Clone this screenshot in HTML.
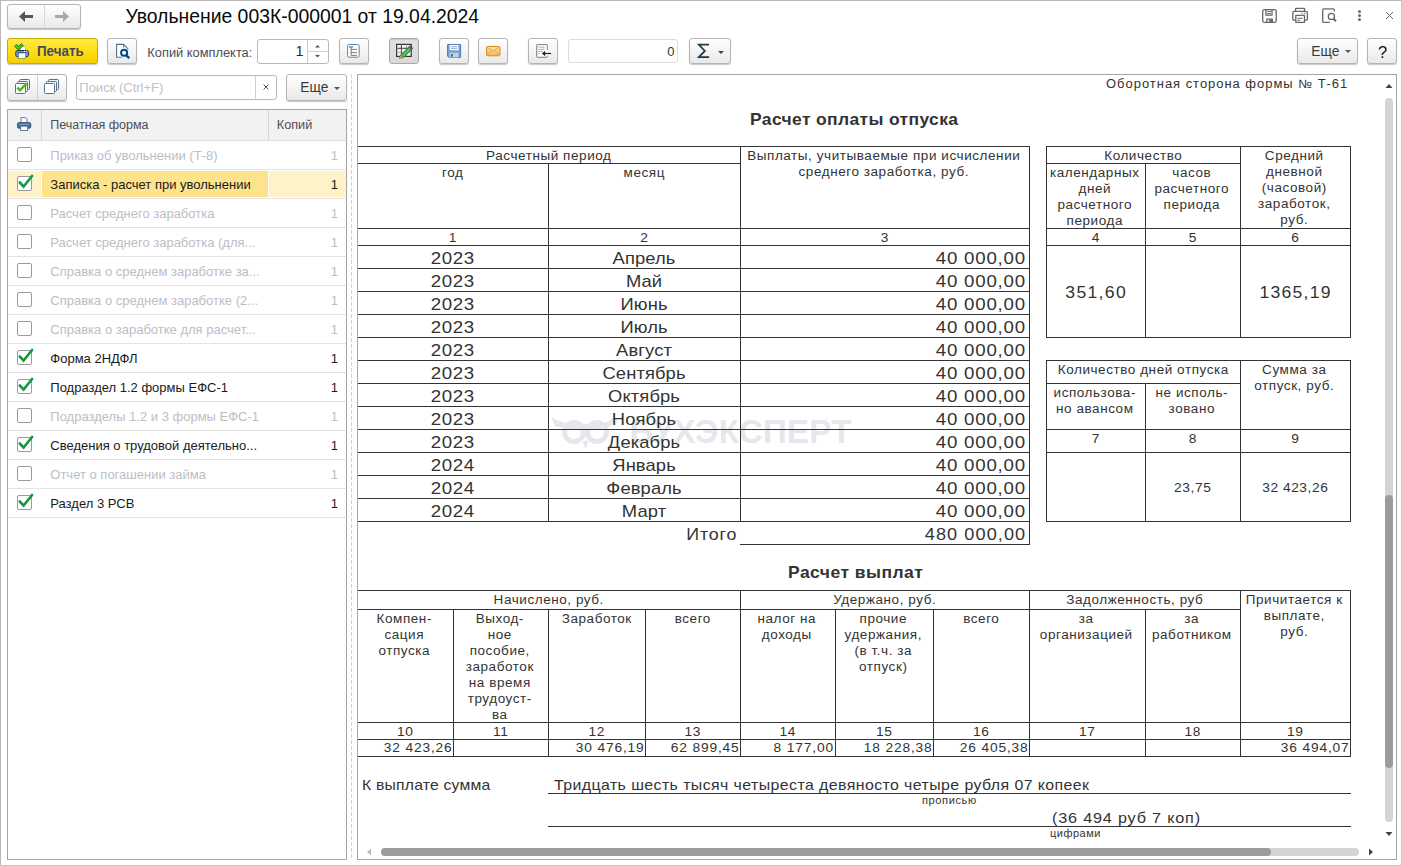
<!DOCTYPE html><html><head><meta charset="utf-8"><style>
html,body{margin:0;padding:0;}
body{width:1402px;height:866px;position:relative;overflow:hidden;background:#fff;font-family:"Liberation Sans",sans-serif;}
.a{position:absolute;box-sizing:content-box;}
.t{position:absolute;white-space:nowrap;}
.btn{border:1px solid #b4b4b4;border-radius:3px;box-shadow:0 1px 1px rgba(0,0,0,0.22);}
svg{overflow:visible}
</style></head><body>
<div class="a" style="left:0px;top:0px;width:1402px;height:1px;background:#b9b9b9"></div>
<div class="a" style="left:0px;top:0px;width:1px;height:866px;background:#b9b9b9"></div>
<div class="a" style="left:1401px;top:0px;width:1px;height:866px;background:#c6c6c6"></div>
<div class="a" style="left:0px;top:865px;width:1402px;height:1px;background:#c6c6c6"></div>
<div class="a btn" style="left:7px;top:4px;width:72px;height:23px;background:linear-gradient(#ffffff,#f4f4f4 50%,#e9e9e9);border-color:#b4b4b4;"></div>
<div class="a" style="left:44px;top:5px;width:1px;height:23px;background:#d6d6d6"></div>
<svg class="a" style="left:19px;top:11px;" width="15" height="11" viewBox="0 0 15 11"><path d="M0 5.5 L6 0 L6 4 L14 4 L14 7 L6 7 L6 11 Z" fill="#555"/></svg>
<svg class="a" style="left:55px;top:11px;" width="14" height="11" viewBox="0 0 14 11"><path d="M14 5.5 L8 0 L8 4 L0 4 L0 7 L8 7 L8 11 Z" fill="#a9a9a9"/></svg>
<div class="t" style="left:125.50px;top:4.79px;font-size:19.36px;line-height:23px;color:#0a0a0a;">Увольнение 003К-000001 от 19.04.2024</div>
<svg class="a" style="left:1255px;top:3px;" width="90" height="25" viewBox="0 0 90 25"><g fill="none" stroke="#686868" stroke-width="1.3" stroke-linejoin="round">
<rect x="7.7" y="6.6" width="13.5" height="12.8" rx="1.6"/>
<path d="M10.9 6.6 V12.2 H17 V6.6"/>
<path d="M12.2 8.4 H16 M12.2 10.4 H16" stroke-width="1"/>
<path d="M11.9 19.4 V16.2 H17.4 V19.4"/><rect x="14.3" y="16.2" width="3.1" height="3.2" fill="#686868" stroke="none"/>
<path d="M40.6 8.3 V5.4 H49.5 V8.3"/>
<path d="M40.4 17.2 H39 Q37.8 17.2 37.8 16 V9.6 Q37.8 8.4 39 8.4 H51.2 Q52.4 8.4 52.4 9.6 V16 Q52.4 17.2 51.2 17.2 H49.8"/>
<rect x="40.8" y="12.4" width="8.7" height="7"/>
<path d="M42.4 15.3 H47.6 M42.4 17.3 H45" stroke-width="1"/>
<path d="M46.2 10.3 H47.5 M48.8 10.3 H50.5" stroke-width="1"/>
<path d="M74.8 19.3 H68.8 Q67.7 19.3 67.7 18.2 V6.9 Q67.7 5.8 68.8 5.8 H78.2 Q79.3 5.8 79.3 6.9 V8.4"/>
<circle cx="76.4" cy="13.5" r="3.1"/>
<path d="M78.6 15.8 L81 18.3" stroke-width="2"/>
</g></svg>
<div class="a" style="left:1358px;top:10.1px;width:3px;height:3px;border-radius:50%;background:#6d6d6d"></div>
<div class="a" style="left:1358px;top:14.0px;width:3px;height:3px;border-radius:50%;background:#6d6d6d"></div>
<div class="a" style="left:1358px;top:17.9px;width:3px;height:3px;border-radius:50%;background:#6d6d6d"></div>
<svg class="a" style="left:1385px;top:11px;" width="9" height="9" viewBox="0 0 9 9"><path d="M1 1 L8 8 M8 1 L1 8" stroke="#666" stroke-width="1"/></svg>
<div class="a btn" style="left:7px;top:38px;width:89px;height:24px;background:linear-gradient(#ffe94a,#ffdf1a 45%,#f2cf00);border-color:#c9aa00;"></div>
<svg class="a" style="left:10px;top:40px;" width="22" height="22" viewBox="0 0 22 22"><rect x="10.7" y="6.2" width="4.8" height="4.5" fill="#fff" stroke="#999" stroke-width="0.6"/>
<rect x="5.8" y="10.5" width="12.6" height="6.2" rx="1.6" fill="#7b9dc9" stroke="#1f3b5c" stroke-width="1"/>
<path d="M7 12.4 H17" stroke="#2a4a6a" stroke-width="0.8"/>
<circle cx="14.5" cy="11.4" r="0.55" fill="#fff"/><circle cx="16.5" cy="11.4" r="0.55" fill="#fff"/>
<rect x="8.6" y="13" width="6.9" height="5.5" fill="#fff" stroke="#5a6a7a" stroke-width="0.6"/>
<path d="M5.3 5.3 L8.4 8 L12.7 4.4" fill="none" stroke="#1d6a12" stroke-width="3.3" stroke-linejoin="miter"/>
<path d="M5.3 5.3 L8.4 8 L12.7 4.4" fill="none" stroke="#3fd418" stroke-width="1.9" stroke-linejoin="miter"/></svg>
<div class="t" style="left:36.70px;top:42.95px;font-size:14px;line-height:17px;color:#454a5e;transform:scaleX(0.955);transform-origin:left center;font-weight:bold;">Печать</div>
<div class="a btn" style="left:107px;top:38px;width:28px;height:24px;background:linear-gradient(#ffffff,#f4f4f4 50%,#e9e9e9);border-color:#b4b4b4;"></div>
<svg class="a" style="left:107px;top:38px;" width="30" height="26" viewBox="0 0 30 26"><path d="M14.8 19.3 H9.6 V6.4 H16.6 L20.8 10.7 V11.5" fill="#fff" stroke="#5a6f88" stroke-width="1.1"/>
<path d="M16.5 6.8 V9.6" stroke="#5a6f88" stroke-width="0.9"/>
<circle cx="17.1" cy="14.7" r="3" fill="#fff" stroke="#004a80" stroke-width="2"/>
<path d="M19.1 17.2 L22.3 20.1" stroke="#004a80" stroke-width="2.4"/></svg>
<div class="t" style="left:147.30px;top:44.85px;font-size:12.85px;line-height:15px;color:#4d4d58;">Копий комплекта:</div>
<div class="a" style="left:257px;top:39px;width:70px;height:23px;border:1px solid #b9b9b9;border-radius:3px;background:#fff"></div>
<div class="a" style="left:307px;top:40px;width:1px;height:23px;background:#c8c8c8"></div>
<div class="a" style="left:308px;top:51px;width:20px;height:1px;background:#d0d0d0"></div>
<div class="t" style="top:42.72px;font-size:13.8px;line-height:17px;color:#222;right:1098.50px;text-align:right;">1</div>
<svg class="a" style="left:315px;top:44.8px;" width="5" height="2.5" viewBox="0 0 5 2.5"><path d="M0 2.5 L2.5 0 L5 2.5 Z" fill="#555"/></svg>
<svg class="a" style="left:315px;top:55.3px;" width="5" height="2.5" viewBox="0 0 5 2.5"><path d="M0 0 L2.5 2.5 L5 0 Z" fill="#555"/></svg>
<div class="a btn" style="left:339px;top:38px;width:28px;height:24px;background:linear-gradient(#ffffff,#f4f4f4 50%,#e9e9e9);border-color:#b4b4b4;"></div>
<svg class="a" style="left:339px;top:38px;" width="30" height="26" viewBox="0 0 30 26"><rect x="8.6" y="6.5" width="11.6" height="12.7" rx="1.6" fill="#fff" stroke="#6a8299" stroke-width="1"/>
<rect x="10.1" y="8.3" width="3.8" height="1.4" fill="#3a88c8"/>
<path d="M12.1 9.7 V17.4 M12.1 11.4 H17.9 M12.1 14.6 H17.9 M12.1 17.4 H17.9" stroke="#6a6a6a" stroke-width="0.9" fill="none"/></svg>
<div class="a btn" style="left:389px;top:38px;width:28px;height:24px;background:linear-gradient(#e2e2e2,#d9d9d9);border-color:#a9a9a9;box-shadow:inset 0 1px 1px rgba(0,0,0,0.12)"></div>
<svg class="a" style="left:389px;top:38px;" width="30" height="26" viewBox="0 0 30 26"><rect x="7.6" y="6.4" width="14.6" height="12" fill="#f4f4f4" stroke="#333" stroke-width="1.2"/>
<path d="M7.6 10.3 H22.2 M7.6 14.5 H22.2" stroke="#aaa" stroke-width="0.9"/>
<path d="M12.4 6.4 V18.4 M17.4 6.4 V18.4" stroke="#999" stroke-width="0.9"/>
<path d="M7.6 10.3 H22.2 M12.4 6.4 V18.4" stroke="#444" stroke-width="0.9"/>
<path d="M11.5 17.2 L19.8 8.9 L22.5 11.6 L14.2 19.9 Z" fill="#4cbc50" stroke="#2a6a30" stroke-width="0.8"/>
<path d="M19.8 8.9 L21.2 7.5 L23.9 10.2 L22.5 11.6 Z" fill="#556070" stroke="#3a4450" stroke-width="0.6"/>
<path d="M11.5 17.2 L10.2 20.8 L14.2 19.9 Z" fill="#d8a860" stroke="#8a6a40" stroke-width="0.5"/></svg>
<div class="a btn" style="left:439px;top:38px;width:28px;height:24px;background:linear-gradient(#ffffff,#f4f4f4 50%,#e9e9e9);border-color:#b4b4b4;"></div>
<svg class="a" style="left:439px;top:38px;" width="30" height="26" viewBox="0 0 30 26"><path d="M8.6 6.6 H21.6 V19.3 H9.8 L8.6 18.1 Z" fill="#7aa4d8" stroke="#4a78b8" stroke-width="1"/>
<rect x="10.7" y="7" width="8.8" height="5.2" fill="#fff"/>
<path d="M11.8 8.7 H18.4 M11.8 10.4 H18.4" stroke="#7a98c0" stroke-width="0.8"/>
<rect x="10.7" y="14.8" width="8.8" height="4.5" fill="#c8d0d0"/>
<rect x="12" y="16.1" width="1.8" height="2.6" fill="#3a64a0"/></svg>
<div class="a btn" style="left:478px;top:38px;width:28px;height:24px;background:linear-gradient(#ffffff,#f4f4f4 50%,#e9e9e9);border-color:#b4b4b4;"></div>
<svg class="a" style="left:478px;top:38px;" width="30" height="26" viewBox="0 0 30 26"><defs><linearGradient id="mg" x1="0" y1="0" x2="0" y2="1"><stop offset="0" stop-color="#fbe2a6"/><stop offset="1" stop-color="#f2bb55"/></linearGradient></defs>
<rect x="8.6" y="8.5" width="13.4" height="9.3" rx="1.5" fill="url(#mg)" stroke="#d08a20" stroke-width="1"/>
<path d="M9 9 L14.8 13 L21.6 9 M9 17.4 L13 13.2 M21.6 17.4 L17 13.2" fill="none" stroke="#d89a40" stroke-width="0.8"/></svg>
<div class="a btn" style="left:528px;top:38px;width:28px;height:24px;background:linear-gradient(#ffffff,#f4f4f4 50%,#e9e9e9);border-color:#b4b4b4;"></div>
<svg class="a" style="left:528px;top:38px;" width="30" height="26" viewBox="0 0 30 26"><path d="M19.3 12 V7.1 Q19.3 6.6 18.8 6.6 H9.2 Q8.7 6.6 8.7 7.1 V18.8 Q8.7 19.3 9.2 19.3 H18.8 Q19.3 19.3 19.3 18.8 V17.8" fill="#fff" stroke="#6a8299" stroke-width="1"/>
<path d="M10.5 9.1 H11.4 M10.5 11.3 H11.4 M10.5 13.5 H11.4 M10.5 15.5 H11.4" stroke="#e04a2a" stroke-width="1.1"/>
<path d="M12.3 9.1 H16.6 M12.3 11.3 H16.6 M12.3 13.5 H14.6" stroke="#8a8a8a" stroke-width="0.8"/>
<path d="M23.1 15.5 H14.5" stroke="#222" stroke-width="1.2"/>
<path d="M14 15.5 L17.2 12.8 L17.2 18.2 Z" fill="#222"/></svg>
<div class="a" style="left:568px;top:39px;width:108px;height:22px;border:1px solid #dcdcdc;border-radius:3px;background:#fff"></div>
<div class="t" style="top:43.50px;font-size:13px;line-height:16px;color:#333;right:727.50px;text-align:right;">0</div>
<div class="a btn" style="left:689px;top:38px;width:40px;height:24px;background:linear-gradient(#ffffff,#f4f4f4 50%,#e9e9e9);border-color:#b4b4b4;"></div>
<svg class="a" style="left:689px;top:38px;" width="40" height="26" viewBox="0 0 40 26"><path d="M20 6.6 H9.8 L15.9 12.9 L9.8 19.1 H20.2" fill="none" stroke="#1f3a4c" stroke-width="1.7" stroke-linejoin="miter"/></svg>
<svg class="a" style="left:718px;top:50.8px;" width="6" height="3" viewBox="0 0 6 3"><path d="M0 0 H6 L3 3 Z" fill="#444"/></svg>
<div class="a btn" style="left:1297px;top:38px;width:59px;height:24px;background:linear-gradient(#ffffff,#f4f4f4 50%,#e9e9e9);border-color:#b4b4b4;"></div>
<div class="t" style="left:1311.30px;top:43.02px;font-size:13.8px;line-height:17px;color:#3a3a3a;">Еще</div>
<svg class="a" style="left:1345px;top:49.5px;" width="6" height="3" viewBox="0 0 6 3"><path d="M0 0 H6 L3 3 Z" fill="#555"/></svg>
<div class="a btn" style="left:1367px;top:38px;width:28px;height:24px;background:linear-gradient(#ffffff,#f4f4f4 50%,#e9e9e9);border-color:#b4b4b4;"></div>
<div class="t" style="left:1378.00px;top:42.28px;font-size:16.5px;line-height:20px;color:#111;">?</div>
<div class="a btn" style="left:7px;top:74px;width:58px;height:25px;background:linear-gradient(#ffffff,#f4f4f4 50%,#e9e9e9);border-color:#b4b4b4;"></div>
<div class="a" style="left:37px;top:75px;width:1px;height:25px;background:#d0d0d0"></div>
<svg class="a" style="left:5px;top:72px;" width="30" height="28" viewBox="0 0 30 28"><g fill="#fff" stroke="#557090" stroke-width="1">
<rect x="14.5" y="7.5" width="10" height="10" rx="1" fill="#eef2f6"/>
<rect x="12.5" y="9.5" width="10" height="10" rx="1" fill="#f6f8fa"/>
<rect x="10.5" y="11.5" width="10" height="10" rx="1"/></g>
<path d="M12.2 15.6 L15 18.4 L21.6 11.4" fill="none" stroke="#4cb61e" stroke-width="2.4"/></svg>
<svg class="a" style="left:34px;top:72px;" width="30" height="28" viewBox="0 0 30 28"><g fill="#fff" stroke="#557090" stroke-width="1">
<rect x="14.5" y="7.5" width="10" height="10" rx="1" fill="#eef2f6"/>
<rect x="12.5" y="9.5" width="10" height="10" rx="1" fill="#f6f8fa"/>
<rect x="10.5" y="11.5" width="10" height="10" rx="1"/></g></svg>
<div class="a" style="left:76px;top:75px;width:199px;height:23px;border:1px solid #b9b9b9;border-radius:3px;background:#fff"></div>
<div class="a" style="left:255px;top:76px;width:1px;height:23px;background:#cfcfcf"></div>
<div class="t" style="left:79.30px;top:79.50px;font-size:13px;line-height:16px;color:#c0c0c8;">Поиск (Ctrl+F)</div>
<svg class="a" style="left:262.5px;top:83.5px;" width="6" height="6" viewBox="0 0 6 6"><path d="M0.5 0.5 L5.5 5.5 M5.5 0.5 L0.5 5.5" stroke="#555" stroke-width="1"/></svg>
<div class="a btn" style="left:286px;top:74px;width:59px;height:25px;background:linear-gradient(#ffffff,#f4f4f4 50%,#e9e9e9);border-color:#b4b4b4;"></div>
<div class="t" style="left:300.30px;top:78.92px;font-size:13.8px;line-height:17px;color:#3a3a3a;">Еще</div>
<svg class="a" style="left:334px;top:86.5px;" width="6" height="3" viewBox="0 0 6 3"><path d="M0 0 H6 L3 3 Z" fill="#555"/></svg>
<div class="a" style="left:7px;top:109px;width:338px;height:749px;border:1px solid #a5a5a5;background:#fff"></div>
<div class="a" style="left:8px;top:110px;width:338px;height:30px;background:#f2f2f2"></div>
<div class="a" style="left:41px;top:110px;width:1px;height:30px;background:#d6d6d6"></div>
<div class="a" style="left:268px;top:110px;width:1px;height:30px;background:#d6d6d6"></div>
<div class="a" style="left:8px;top:140px;width:338px;height:1px;background:#dedede"></div>
<svg class="a" style="left:15px;top:115px;" width="18" height="18" viewBox="0 0 18 18"><path d="M6 7.5 V2.6 H10.6 L12 4 V7.5" fill="#fff" stroke="#5a7090" stroke-width="0.9"/>
<rect x="2.5" y="7.6" width="13.3" height="5.6" rx="1.5" fill="#4a7098" stroke="#2d4f78" stroke-width="0.9"/>
<path d="M4 9.2 H14.2" stroke="#9ab4d0" stroke-width="0.8"/>
<rect x="5.7" y="11.2" width="7" height="4.4" fill="#fff" stroke="#5a7090" stroke-width="0.9"/></svg>
<div class="t" style="left:50.30px;top:118.37px;font-size:12.5px;line-height:15px;color:#4d4d55;">Печатная форма</div>
<div class="t" style="left:276.80px;top:118.30px;font-size:12.7px;line-height:15px;color:#4d4d55;">Копий</div>
<div class="a" style="left:8px;top:169px;width:338px;height:1px;background:#e3e3e3"></div>
<div class="a" style="left:17px;top:147px;width:13px;height:13px;border:1px solid #9a9a9a;border-radius:2px;background:#fff"></div>
<div class="t" style="left:50.30px;top:148.00px;font-size:13px;line-height:16px;color:#bdbdc6;">Приказ об увольнении (Т-8)</div>
<div class="t" style="top:148.00px;font-size:13px;line-height:16px;color:#bdbdc6;right:1064.00px;text-align:right;">1</div>
<div class="a" style="left:8px;top:171px;width:33px;height:26px;background:#fdf2c8"></div>
<div class="a" style="left:42px;top:171px;width:226px;height:26px;background:#fde48c"></div>
<div class="a" style="left:269px;top:171px;width:77px;height:26px;background:#fdf2c8"></div>
<div class="a" style="left:8px;top:198px;width:338px;height:1px;background:#e3e3e3"></div>
<div class="a" style="left:17px;top:176px;width:13px;height:13px;border:1px solid #9a9a9a;border-radius:2px;background:#fff"></div>
<svg class="a" style="left:19px;top:172px;" width="15" height="16" viewBox="0 0 15 16"><path d="M0.8 10.5 L4.6 14.6 L13.1 4" fill="none" stroke="#109a40" stroke-width="2.6" stroke-linecap="round"/></svg>
<div class="t" style="left:50.30px;top:177.00px;font-size:13px;line-height:16px;color:#1a1a1a;">Записка - расчет при увольнении</div>
<div class="t" style="top:177.00px;font-size:13px;line-height:16px;color:#1a1a1a;right:1064.00px;text-align:right;">1</div>
<div class="a" style="left:8px;top:227px;width:338px;height:1px;background:#e3e3e3"></div>
<div class="a" style="left:17px;top:205px;width:13px;height:13px;border:1px solid #9a9a9a;border-radius:2px;background:#fff"></div>
<div class="t" style="left:50.30px;top:206.00px;font-size:13px;line-height:16px;color:#bdbdc6;">Расчет среднего заработка</div>
<div class="t" style="top:206.00px;font-size:13px;line-height:16px;color:#bdbdc6;right:1064.00px;text-align:right;">1</div>
<div class="a" style="left:8px;top:256px;width:338px;height:1px;background:#e3e3e3"></div>
<div class="a" style="left:17px;top:234px;width:13px;height:13px;border:1px solid #9a9a9a;border-radius:2px;background:#fff"></div>
<div class="t" style="left:50.30px;top:235.00px;font-size:13px;line-height:16px;color:#bdbdc6;">Расчет среднего заработка (для...</div>
<div class="t" style="top:235.00px;font-size:13px;line-height:16px;color:#bdbdc6;right:1064.00px;text-align:right;">1</div>
<div class="a" style="left:8px;top:285px;width:338px;height:1px;background:#e3e3e3"></div>
<div class="a" style="left:17px;top:263px;width:13px;height:13px;border:1px solid #9a9a9a;border-radius:2px;background:#fff"></div>
<div class="t" style="left:50.30px;top:264.00px;font-size:13px;line-height:16px;color:#bdbdc6;">Справка о среднем заработке за...</div>
<div class="t" style="top:264.00px;font-size:13px;line-height:16px;color:#bdbdc6;right:1064.00px;text-align:right;">1</div>
<div class="a" style="left:8px;top:314px;width:338px;height:1px;background:#e3e3e3"></div>
<div class="a" style="left:17px;top:292px;width:13px;height:13px;border:1px solid #9a9a9a;border-radius:2px;background:#fff"></div>
<div class="t" style="left:50.30px;top:293.00px;font-size:13px;line-height:16px;color:#bdbdc6;">Справка о среднем заработке (2...</div>
<div class="t" style="top:293.00px;font-size:13px;line-height:16px;color:#bdbdc6;right:1064.00px;text-align:right;">1</div>
<div class="a" style="left:8px;top:343px;width:338px;height:1px;background:#e3e3e3"></div>
<div class="a" style="left:17px;top:321px;width:13px;height:13px;border:1px solid #9a9a9a;border-radius:2px;background:#fff"></div>
<div class="t" style="left:50.30px;top:322.00px;font-size:13px;line-height:16px;color:#bdbdc6;">Справка о заработке для расчет...</div>
<div class="t" style="top:322.00px;font-size:13px;line-height:16px;color:#bdbdc6;right:1064.00px;text-align:right;">1</div>
<div class="a" style="left:8px;top:372px;width:338px;height:1px;background:#e3e3e3"></div>
<div class="a" style="left:17px;top:350px;width:13px;height:13px;border:1px solid #9a9a9a;border-radius:2px;background:#fff"></div>
<svg class="a" style="left:19px;top:346px;" width="15" height="16" viewBox="0 0 15 16"><path d="M0.8 10.5 L4.6 14.6 L13.1 4" fill="none" stroke="#109a40" stroke-width="2.6" stroke-linecap="round"/></svg>
<div class="t" style="left:50.30px;top:351.00px;font-size:13px;line-height:16px;color:#1a1a1a;">Форма 2НДФЛ</div>
<div class="t" style="top:351.00px;font-size:13px;line-height:16px;color:#1a1a1a;right:1064.00px;text-align:right;">1</div>
<div class="a" style="left:8px;top:401px;width:338px;height:1px;background:#e3e3e3"></div>
<div class="a" style="left:17px;top:379px;width:13px;height:13px;border:1px solid #9a9a9a;border-radius:2px;background:#fff"></div>
<svg class="a" style="left:19px;top:375px;" width="15" height="16" viewBox="0 0 15 16"><path d="M0.8 10.5 L4.6 14.6 L13.1 4" fill="none" stroke="#109a40" stroke-width="2.6" stroke-linecap="round"/></svg>
<div class="t" style="left:50.30px;top:380.00px;font-size:13px;line-height:16px;color:#1a1a1a;">Подраздел 1.2 формы ЕФС-1</div>
<div class="t" style="top:380.00px;font-size:13px;line-height:16px;color:#1a1a1a;right:1064.00px;text-align:right;">1</div>
<div class="a" style="left:8px;top:430px;width:338px;height:1px;background:#e3e3e3"></div>
<div class="a" style="left:17px;top:408px;width:13px;height:13px;border:1px solid #9a9a9a;border-radius:2px;background:#fff"></div>
<div class="t" style="left:50.30px;top:409.00px;font-size:13px;line-height:16px;color:#bdbdc6;">Подразделы 1.2 и 3 формы ЕФС-1</div>
<div class="t" style="top:409.00px;font-size:13px;line-height:16px;color:#bdbdc6;right:1064.00px;text-align:right;">1</div>
<div class="a" style="left:8px;top:459px;width:338px;height:1px;background:#e3e3e3"></div>
<div class="a" style="left:17px;top:437px;width:13px;height:13px;border:1px solid #9a9a9a;border-radius:2px;background:#fff"></div>
<svg class="a" style="left:19px;top:433px;" width="15" height="16" viewBox="0 0 15 16"><path d="M0.8 10.5 L4.6 14.6 L13.1 4" fill="none" stroke="#109a40" stroke-width="2.6" stroke-linecap="round"/></svg>
<div class="t" style="left:50.30px;top:438.00px;font-size:13px;line-height:16px;color:#1a1a1a;">Сведения о трудовой деятельно...</div>
<div class="t" style="top:438.00px;font-size:13px;line-height:16px;color:#1a1a1a;right:1064.00px;text-align:right;">1</div>
<div class="a" style="left:8px;top:488px;width:338px;height:1px;background:#e3e3e3"></div>
<div class="a" style="left:17px;top:466px;width:13px;height:13px;border:1px solid #9a9a9a;border-radius:2px;background:#fff"></div>
<div class="t" style="left:50.30px;top:467.00px;font-size:13px;line-height:16px;color:#bdbdc6;">Отчет о погашении займа</div>
<div class="t" style="top:467.00px;font-size:13px;line-height:16px;color:#bdbdc6;right:1064.00px;text-align:right;">1</div>
<div class="a" style="left:8px;top:517px;width:338px;height:1px;background:#e3e3e3"></div>
<div class="a" style="left:17px;top:495px;width:13px;height:13px;border:1px solid #9a9a9a;border-radius:2px;background:#fff"></div>
<svg class="a" style="left:19px;top:491px;" width="15" height="16" viewBox="0 0 15 16"><path d="M0.8 10.5 L4.6 14.6 L13.1 4" fill="none" stroke="#109a40" stroke-width="2.6" stroke-linecap="round"/></svg>
<div class="t" style="left:50.30px;top:496.00px;font-size:13px;line-height:16px;color:#1a1a1a;">Раздел 3 РСВ</div>
<div class="t" style="top:496.00px;font-size:13px;line-height:16px;color:#1a1a1a;right:1064.00px;text-align:right;">1</div>
<div class="a" style="left:351px;top:74px;width:1px;height:786px;background:repeating-linear-gradient(#d2d2d2 0 4px,transparent 4px 6px)"></div>
<div class="a" style="left:357px;top:74px;width:1038px;height:784px;border:1px solid #a5a5a5;background:#fff"></div>
<div class="t" style="left:629.5px;top:414px;font-size:33px;line-height:36px;font-weight:bold;color:#e6e6ec;letter-spacing:0.3px;">БУХЭКСПЕРТ</div>
<svg class="a" style="left:551px;top:414px;" width="64" height="36" viewBox="0 0 64 36"><circle cx="23" cy="18" r="9.5" fill="none" stroke="#e6e6ec" stroke-width="5"/>
<circle cx="46" cy="18" r="9.5" fill="none" stroke="#e6e6ec" stroke-width="5"/>
<path d="M0 3 Q15 12 34.5 10 Q54 12 64 3 L60 12 Q48 17 34.5 16 Q21 17 4 12 Z" fill="#e6e6ec"/>
<path d="M31.5 27 L37.5 27 L34.5 35 Z" fill="#e6e6ec"/></svg>
<div class="t" style="top:76.84px;font-size:12px;line-height:14px;color:#333;transform:scaleX(1.08);transform-origin:right center;letter-spacing:0.91px;right:54.09px;text-align:right;">Оборотная сторона формы № Т-61</div>
<div class="t" style="left:750.00px;top:109.28px;font-size:16.5px;line-height:20px;color:#333;transform:scaleX(1.06);transform-origin:left center;letter-spacing:0.34px;font-weight:bold;">Расчет оплаты отпуска</div>
<div class="a" style="left:358px;top:146px;width:672px;height:1px;background:#333"></div>
<div class="a" style="left:358px;top:163px;width:383px;height:1px;background:#333"></div>
<div class="a" style="left:358px;top:228px;width:672px;height:1px;background:#333"></div>
<div class="a" style="left:358px;top:245px;width:672px;height:1px;background:#333"></div>
<div class="a" style="left:358px;top:268px;width:672px;height:1px;background:#333"></div>
<div class="a" style="left:358px;top:291px;width:672px;height:1px;background:#333"></div>
<div class="a" style="left:358px;top:314px;width:672px;height:1px;background:#333"></div>
<div class="a" style="left:358px;top:337px;width:672px;height:1px;background:#333"></div>
<div class="a" style="left:358px;top:360px;width:672px;height:1px;background:#333"></div>
<div class="a" style="left:358px;top:383px;width:672px;height:1px;background:#333"></div>
<div class="a" style="left:358px;top:406px;width:672px;height:1px;background:#333"></div>
<div class="a" style="left:358px;top:429px;width:672px;height:1px;background:#333"></div>
<div class="a" style="left:358px;top:452px;width:672px;height:1px;background:#333"></div>
<div class="a" style="left:358px;top:475px;width:672px;height:1px;background:#333"></div>
<div class="a" style="left:358px;top:498px;width:672px;height:1px;background:#333"></div>
<div class="a" style="left:358px;top:521px;width:672px;height:1px;background:#333"></div>
<div class="a" style="left:548px;top:163px;width:1px;height:359px;background:#333"></div>
<div class="a" style="left:740px;top:146px;width:1px;height:376px;background:#333"></div>
<div class="a" style="left:1029px;top:146px;width:1px;height:399px;background:#333"></div>
<div class="a" style="left:740px;top:544px;width:290px;height:1px;background:#333"></div>
<div class="t" style="left:357.00px;top:149.17px;font-size:12.5px;line-height:15px;color:#333;transform:scaleX(1.08);transform-origin:center center;letter-spacing:0.52px;width:383.00px;text-align:center;text-indent:0.52px;">Расчетный период</div>
<div class="t" style="left:357.00px;top:166.17px;font-size:12.5px;line-height:15px;color:#333;transform:scaleX(1.08);transform-origin:center center;letter-spacing:0.52px;width:191.00px;text-align:center;text-indent:0.52px;">год</div>
<div class="t" style="left:548.00px;top:166.17px;font-size:12.5px;line-height:15px;color:#333;transform:scaleX(1.08);transform-origin:center center;letter-spacing:0.52px;width:192.00px;text-align:center;text-indent:0.52px;">месяц</div>
<div class="t" style="left:738.50px;top:149.17px;font-size:12.5px;line-height:15px;color:#333;transform:scaleX(1.08);transform-origin:center center;letter-spacing:0.52px;width:289.00px;text-align:center;text-indent:0.52px;">Выплаты, учитываемые при исчислении</div>
<div class="t" style="left:738.50px;top:165.17px;font-size:12.5px;line-height:15px;color:#333;transform:scaleX(1.08);transform-origin:center center;letter-spacing:0.52px;width:289.00px;text-align:center;text-indent:0.52px;">среднего заработка, руб.</div>
<div class="t" style="left:357.00px;top:231.17px;font-size:12.5px;line-height:15px;color:#333;transform:scaleX(1.1);transform-origin:center center;letter-spacing:0.5px;width:191.00px;text-align:center;text-indent:0.5px;">1</div>
<div class="t" style="left:548.00px;top:231.17px;font-size:12.5px;line-height:15px;color:#333;transform:scaleX(1.1);transform-origin:center center;letter-spacing:0.5px;width:192.00px;text-align:center;text-indent:0.5px;">2</div>
<div class="t" style="left:740.00px;top:231.17px;font-size:12.5px;line-height:15px;color:#333;transform:scaleX(1.1);transform-origin:center center;letter-spacing:0.5px;width:289.00px;text-align:center;text-indent:0.5px;">3</div>
<div class="t" style="left:357.00px;top:249.11px;font-size:17px;line-height:20px;color:#333;transform:scaleX(1.1);transform-origin:center center;letter-spacing:0.51px;width:191.00px;text-align:center;text-indent:0.51px;">2023</div>
<div class="t" style="left:548.00px;top:249.11px;font-size:17px;line-height:20px;color:#333;transform:scaleX(1.08);transform-origin:center center;letter-spacing:0.1px;width:192.00px;text-align:center;text-indent:0.1px;">Апрель</div>
<div class="t" style="top:249.11px;font-size:17px;line-height:20px;color:#333;transform:scaleX(1.1);transform-origin:right center;letter-spacing:0.7px;right:376.30px;text-align:right;">40 000,00</div>
<div class="t" style="left:357.00px;top:272.11px;font-size:17px;line-height:20px;color:#333;transform:scaleX(1.1);transform-origin:center center;letter-spacing:0.51px;width:191.00px;text-align:center;text-indent:0.51px;">2023</div>
<div class="t" style="left:548.00px;top:272.11px;font-size:17px;line-height:20px;color:#333;transform:scaleX(1.08);transform-origin:center center;letter-spacing:0.1px;width:192.00px;text-align:center;text-indent:0.1px;">Май</div>
<div class="t" style="top:272.11px;font-size:17px;line-height:20px;color:#333;transform:scaleX(1.1);transform-origin:right center;letter-spacing:0.7px;right:376.30px;text-align:right;">40 000,00</div>
<div class="t" style="left:357.00px;top:295.11px;font-size:17px;line-height:20px;color:#333;transform:scaleX(1.1);transform-origin:center center;letter-spacing:0.51px;width:191.00px;text-align:center;text-indent:0.51px;">2023</div>
<div class="t" style="left:548.00px;top:295.11px;font-size:17px;line-height:20px;color:#333;transform:scaleX(1.08);transform-origin:center center;letter-spacing:0.1px;width:192.00px;text-align:center;text-indent:0.1px;">Июнь</div>
<div class="t" style="top:295.11px;font-size:17px;line-height:20px;color:#333;transform:scaleX(1.1);transform-origin:right center;letter-spacing:0.7px;right:376.30px;text-align:right;">40 000,00</div>
<div class="t" style="left:357.00px;top:318.11px;font-size:17px;line-height:20px;color:#333;transform:scaleX(1.1);transform-origin:center center;letter-spacing:0.51px;width:191.00px;text-align:center;text-indent:0.51px;">2023</div>
<div class="t" style="left:548.00px;top:318.11px;font-size:17px;line-height:20px;color:#333;transform:scaleX(1.08);transform-origin:center center;letter-spacing:0.1px;width:192.00px;text-align:center;text-indent:0.1px;">Июль</div>
<div class="t" style="top:318.11px;font-size:17px;line-height:20px;color:#333;transform:scaleX(1.1);transform-origin:right center;letter-spacing:0.7px;right:376.30px;text-align:right;">40 000,00</div>
<div class="t" style="left:357.00px;top:341.11px;font-size:17px;line-height:20px;color:#333;transform:scaleX(1.1);transform-origin:center center;letter-spacing:0.51px;width:191.00px;text-align:center;text-indent:0.51px;">2023</div>
<div class="t" style="left:548.00px;top:341.11px;font-size:17px;line-height:20px;color:#333;transform:scaleX(1.08);transform-origin:center center;letter-spacing:0.1px;width:192.00px;text-align:center;text-indent:0.1px;">Август</div>
<div class="t" style="top:341.11px;font-size:17px;line-height:20px;color:#333;transform:scaleX(1.1);transform-origin:right center;letter-spacing:0.7px;right:376.30px;text-align:right;">40 000,00</div>
<div class="t" style="left:357.00px;top:364.11px;font-size:17px;line-height:20px;color:#333;transform:scaleX(1.1);transform-origin:center center;letter-spacing:0.51px;width:191.00px;text-align:center;text-indent:0.51px;">2023</div>
<div class="t" style="left:548.00px;top:364.11px;font-size:17px;line-height:20px;color:#333;transform:scaleX(1.08);transform-origin:center center;letter-spacing:0.1px;width:192.00px;text-align:center;text-indent:0.1px;">Сентябрь</div>
<div class="t" style="top:364.11px;font-size:17px;line-height:20px;color:#333;transform:scaleX(1.1);transform-origin:right center;letter-spacing:0.7px;right:376.30px;text-align:right;">40 000,00</div>
<div class="t" style="left:357.00px;top:387.11px;font-size:17px;line-height:20px;color:#333;transform:scaleX(1.1);transform-origin:center center;letter-spacing:0.51px;width:191.00px;text-align:center;text-indent:0.51px;">2023</div>
<div class="t" style="left:548.00px;top:387.11px;font-size:17px;line-height:20px;color:#333;transform:scaleX(1.08);transform-origin:center center;letter-spacing:0.1px;width:192.00px;text-align:center;text-indent:0.1px;">Октябрь</div>
<div class="t" style="top:387.11px;font-size:17px;line-height:20px;color:#333;transform:scaleX(1.1);transform-origin:right center;letter-spacing:0.7px;right:376.30px;text-align:right;">40 000,00</div>
<div class="t" style="left:357.00px;top:410.11px;font-size:17px;line-height:20px;color:#333;transform:scaleX(1.1);transform-origin:center center;letter-spacing:0.51px;width:191.00px;text-align:center;text-indent:0.51px;">2023</div>
<div class="t" style="left:548.00px;top:410.11px;font-size:17px;line-height:20px;color:#333;transform:scaleX(1.08);transform-origin:center center;letter-spacing:0.1px;width:192.00px;text-align:center;text-indent:0.1px;">Ноябрь</div>
<div class="t" style="top:410.11px;font-size:17px;line-height:20px;color:#333;transform:scaleX(1.1);transform-origin:right center;letter-spacing:0.7px;right:376.30px;text-align:right;">40 000,00</div>
<div class="t" style="left:357.00px;top:433.11px;font-size:17px;line-height:20px;color:#333;transform:scaleX(1.1);transform-origin:center center;letter-spacing:0.51px;width:191.00px;text-align:center;text-indent:0.51px;">2023</div>
<div class="t" style="left:548.00px;top:433.11px;font-size:17px;line-height:20px;color:#333;transform:scaleX(1.08);transform-origin:center center;letter-spacing:0.1px;width:192.00px;text-align:center;text-indent:0.1px;">Декабрь</div>
<div class="t" style="top:433.11px;font-size:17px;line-height:20px;color:#333;transform:scaleX(1.1);transform-origin:right center;letter-spacing:0.7px;right:376.30px;text-align:right;">40 000,00</div>
<div class="t" style="left:357.00px;top:456.11px;font-size:17px;line-height:20px;color:#333;transform:scaleX(1.1);transform-origin:center center;letter-spacing:0.51px;width:191.00px;text-align:center;text-indent:0.51px;">2024</div>
<div class="t" style="left:548.00px;top:456.11px;font-size:17px;line-height:20px;color:#333;transform:scaleX(1.08);transform-origin:center center;letter-spacing:0.1px;width:192.00px;text-align:center;text-indent:0.1px;">Январь</div>
<div class="t" style="top:456.11px;font-size:17px;line-height:20px;color:#333;transform:scaleX(1.1);transform-origin:right center;letter-spacing:0.7px;right:376.30px;text-align:right;">40 000,00</div>
<div class="t" style="left:357.00px;top:479.11px;font-size:17px;line-height:20px;color:#333;transform:scaleX(1.1);transform-origin:center center;letter-spacing:0.51px;width:191.00px;text-align:center;text-indent:0.51px;">2024</div>
<div class="t" style="left:548.00px;top:479.11px;font-size:17px;line-height:20px;color:#333;transform:scaleX(1.08);transform-origin:center center;letter-spacing:0.1px;width:192.00px;text-align:center;text-indent:0.1px;">Февраль</div>
<div class="t" style="top:479.11px;font-size:17px;line-height:20px;color:#333;transform:scaleX(1.1);transform-origin:right center;letter-spacing:0.7px;right:376.30px;text-align:right;">40 000,00</div>
<div class="t" style="left:357.00px;top:502.11px;font-size:17px;line-height:20px;color:#333;transform:scaleX(1.1);transform-origin:center center;letter-spacing:0.51px;width:191.00px;text-align:center;text-indent:0.51px;">2024</div>
<div class="t" style="left:548.00px;top:502.11px;font-size:17px;line-height:20px;color:#333;transform:scaleX(1.08);transform-origin:center center;letter-spacing:0.1px;width:192.00px;text-align:center;text-indent:0.1px;">Март</div>
<div class="t" style="top:502.11px;font-size:17px;line-height:20px;color:#333;transform:scaleX(1.1);transform-origin:right center;letter-spacing:0.7px;right:376.30px;text-align:right;">40 000,00</div>
<div class="t" style="top:524.28px;font-size:16.5px;line-height:20px;color:#333;transform:scaleX(1.08);transform-origin:right center;letter-spacing:0.8px;right:665.20px;text-align:right;">Итого</div>
<div class="t" style="top:524.28px;font-size:16.5px;line-height:20px;color:#333;transform:scaleX(1.1);transform-origin:right center;letter-spacing:0.96px;right:376.04px;text-align:right;">480 000,00</div>
<div class="a" style="left:1046px;top:146px;width:305px;height:1px;background:#333"></div>
<div class="a" style="left:1046px;top:163px;width:195px;height:1px;background:#333"></div>
<div class="a" style="left:1046px;top:228px;width:305px;height:1px;background:#333"></div>
<div class="a" style="left:1046px;top:245px;width:305px;height:1px;background:#333"></div>
<div class="a" style="left:1046px;top:337px;width:305px;height:1px;background:#333"></div>
<div class="a" style="left:1046px;top:146px;width:1px;height:192px;background:#333"></div>
<div class="a" style="left:1145px;top:163px;width:1px;height:175px;background:#333"></div>
<div class="a" style="left:1240px;top:146px;width:1px;height:192px;background:#333"></div>
<div class="a" style="left:1350px;top:146px;width:1px;height:192px;background:#333"></div>
<div class="t" style="left:1046.00px;top:149.17px;font-size:12.5px;line-height:15px;color:#333;transform:scaleX(1.08);transform-origin:center center;letter-spacing:0.52px;width:194.00px;text-align:center;text-indent:0.52px;">Количество</div>
<div class="t" style="left:1044.50px;top:166.17px;font-size:12.5px;line-height:15px;color:#333;transform:scaleX(1.08);transform-origin:center center;letter-spacing:0.52px;width:99.00px;text-align:center;text-indent:0.52px;">календарных</div>
<div class="t" style="left:1044.50px;top:182.17px;font-size:12.5px;line-height:15px;color:#333;transform:scaleX(1.08);transform-origin:center center;letter-spacing:0.52px;width:99.00px;text-align:center;text-indent:0.52px;">дней</div>
<div class="t" style="left:1044.50px;top:198.17px;font-size:12.5px;line-height:15px;color:#333;transform:scaleX(1.08);transform-origin:center center;letter-spacing:0.52px;width:99.00px;text-align:center;text-indent:0.52px;">расчетного</div>
<div class="t" style="left:1044.50px;top:214.17px;font-size:12.5px;line-height:15px;color:#333;transform:scaleX(1.08);transform-origin:center center;letter-spacing:0.52px;width:99.00px;text-align:center;text-indent:0.52px;">периода</div>
<div class="t" style="left:1143.50px;top:166.17px;font-size:12.5px;line-height:15px;color:#333;transform:scaleX(1.08);transform-origin:center center;letter-spacing:0.52px;width:95.00px;text-align:center;text-indent:0.52px;">часов</div>
<div class="t" style="left:1143.50px;top:182.17px;font-size:12.5px;line-height:15px;color:#333;transform:scaleX(1.08);transform-origin:center center;letter-spacing:0.52px;width:95.00px;text-align:center;text-indent:0.52px;">расчетного</div>
<div class="t" style="left:1143.50px;top:198.17px;font-size:12.5px;line-height:15px;color:#333;transform:scaleX(1.08);transform-origin:center center;letter-spacing:0.52px;width:95.00px;text-align:center;text-indent:0.52px;">периода</div>
<div class="t" style="left:1238.50px;top:149.17px;font-size:12.5px;line-height:15px;color:#333;transform:scaleX(1.08);transform-origin:center center;letter-spacing:0.52px;width:110.00px;text-align:center;text-indent:0.52px;">Средний</div>
<div class="t" style="left:1238.50px;top:165.17px;font-size:12.5px;line-height:15px;color:#333;transform:scaleX(1.08);transform-origin:center center;letter-spacing:0.52px;width:110.00px;text-align:center;text-indent:0.52px;">дневной</div>
<div class="t" style="left:1238.50px;top:181.17px;font-size:12.5px;line-height:15px;color:#333;transform:scaleX(1.08);transform-origin:center center;letter-spacing:0.52px;width:110.00px;text-align:center;text-indent:0.52px;">(часовой)</div>
<div class="t" style="left:1238.50px;top:197.17px;font-size:12.5px;line-height:15px;color:#333;transform:scaleX(1.08);transform-origin:center center;letter-spacing:0.52px;width:110.00px;text-align:center;text-indent:0.52px;">заработок,</div>
<div class="t" style="left:1238.50px;top:213.17px;font-size:12.5px;line-height:15px;color:#333;transform:scaleX(1.08);transform-origin:center center;letter-spacing:0.52px;width:110.00px;text-align:center;text-indent:0.52px;">руб.</div>
<div class="t" style="left:1046.00px;top:231.17px;font-size:12.5px;line-height:15px;color:#333;transform:scaleX(1.1);transform-origin:center center;letter-spacing:0.5px;width:99.00px;text-align:center;text-indent:0.5px;">4</div>
<div class="t" style="left:1145.00px;top:231.17px;font-size:12.5px;line-height:15px;color:#333;transform:scaleX(1.1);transform-origin:center center;letter-spacing:0.5px;width:95.00px;text-align:center;text-indent:0.5px;">5</div>
<div class="t" style="left:1240.00px;top:231.17px;font-size:12.5px;line-height:15px;color:#333;transform:scaleX(1.1);transform-origin:center center;letter-spacing:0.5px;width:110.00px;text-align:center;text-indent:0.5px;">6</div>
<div class="t" style="left:1046.00px;top:283.46px;font-size:16px;line-height:19px;color:#333;transform:scaleX(1.1);transform-origin:center center;letter-spacing:1.2px;width:99.00px;text-align:center;text-indent:1.2px;">351,60</div>
<div class="t" style="left:1240.00px;top:283.46px;font-size:16px;line-height:19px;color:#333;transform:scaleX(1.1);transform-origin:center center;letter-spacing:1.15px;width:110.00px;text-align:center;text-indent:1.15px;">1365,19</div>
<div class="a" style="left:1046px;top:360px;width:305px;height:1px;background:#333"></div>
<div class="a" style="left:1046px;top:383px;width:195px;height:1px;background:#333"></div>
<div class="a" style="left:1046px;top:429px;width:305px;height:1px;background:#333"></div>
<div class="a" style="left:1046px;top:452px;width:305px;height:1px;background:#333"></div>
<div class="a" style="left:1046px;top:521px;width:305px;height:1px;background:#333"></div>
<div class="a" style="left:1046px;top:360px;width:1px;height:162px;background:#333"></div>
<div class="a" style="left:1145px;top:383px;width:1px;height:139px;background:#333"></div>
<div class="a" style="left:1240px;top:360px;width:1px;height:162px;background:#333"></div>
<div class="a" style="left:1350px;top:360px;width:1px;height:162px;background:#333"></div>
<div class="t" style="left:1046.00px;top:363.17px;font-size:12.5px;line-height:15px;color:#333;transform:scaleX(1.08);transform-origin:center center;letter-spacing:0.52px;width:194.00px;text-align:center;text-indent:0.52px;">Количество дней отпуска</div>
<div class="t" style="left:1044.50px;top:386.17px;font-size:12.5px;line-height:15px;color:#333;transform:scaleX(1.08);transform-origin:center center;letter-spacing:0.52px;width:99.00px;text-align:center;text-indent:0.52px;">использова-</div>
<div class="t" style="left:1044.50px;top:402.17px;font-size:12.5px;line-height:15px;color:#333;transform:scaleX(1.08);transform-origin:center center;letter-spacing:0.52px;width:99.00px;text-align:center;text-indent:0.52px;">но авансом</div>
<div class="t" style="left:1143.50px;top:386.17px;font-size:12.5px;line-height:15px;color:#333;transform:scaleX(1.08);transform-origin:center center;letter-spacing:0.52px;width:95.00px;text-align:center;text-indent:0.52px;">не исполь-</div>
<div class="t" style="left:1143.50px;top:402.17px;font-size:12.5px;line-height:15px;color:#333;transform:scaleX(1.08);transform-origin:center center;letter-spacing:0.52px;width:95.00px;text-align:center;text-indent:0.52px;">зовано</div>
<div class="t" style="left:1238.50px;top:363.17px;font-size:12.5px;line-height:15px;color:#333;transform:scaleX(1.08);transform-origin:center center;letter-spacing:0.52px;width:110.00px;text-align:center;text-indent:0.52px;">Сумма за</div>
<div class="t" style="left:1238.50px;top:379.17px;font-size:12.5px;line-height:15px;color:#333;transform:scaleX(1.08);transform-origin:center center;letter-spacing:0.52px;width:110.00px;text-align:center;text-indent:0.52px;">отпуск, руб.</div>
<div class="t" style="left:1046.00px;top:432.17px;font-size:12.5px;line-height:15px;color:#333;transform:scaleX(1.1);transform-origin:center center;letter-spacing:0.5px;width:99.00px;text-align:center;text-indent:0.5px;">7</div>
<div class="t" style="left:1145.00px;top:432.17px;font-size:12.5px;line-height:15px;color:#333;transform:scaleX(1.1);transform-origin:center center;letter-spacing:0.5px;width:95.00px;text-align:center;text-indent:0.5px;">8</div>
<div class="t" style="left:1240.00px;top:432.17px;font-size:12.5px;line-height:15px;color:#333;transform:scaleX(1.1);transform-origin:center center;letter-spacing:0.5px;width:110.00px;text-align:center;text-indent:0.5px;">9</div>
<div class="t" style="left:1145.00px;top:481.17px;font-size:12.5px;line-height:15px;color:#333;transform:scaleX(1.1);transform-origin:center center;letter-spacing:0.55px;width:95.00px;text-align:center;text-indent:0.55px;">23,75</div>
<div class="t" style="left:1240.00px;top:481.17px;font-size:12.5px;line-height:15px;color:#333;transform:scaleX(1.1);transform-origin:center center;letter-spacing:0.5px;width:110.00px;text-align:center;text-indent:0.5px;">32 423,26</div>
<div class="t" style="left:787.50px;top:561.88px;font-size:16.5px;line-height:20px;color:#333;transform:scaleX(1.06);transform-origin:left center;letter-spacing:0.45px;font-weight:bold;">Расчет выплат</div>
<div class="a" style="left:358px;top:590px;width:993px;height:1px;background:#333"></div>
<div class="a" style="left:358px;top:609px;width:883px;height:1px;background:#333"></div>
<div class="a" style="left:358px;top:722px;width:993px;height:1px;background:#333"></div>
<div class="a" style="left:358px;top:739px;width:993px;height:1px;background:#333"></div>
<div class="a" style="left:358px;top:756px;width:993px;height:1px;background:#333"></div>
<div class="a" style="left:453px;top:609px;width:1px;height:148px;background:#333"></div>
<div class="a" style="left:548px;top:609px;width:1px;height:148px;background:#333"></div>
<div class="a" style="left:645px;top:609px;width:1px;height:148px;background:#333"></div>
<div class="a" style="left:740px;top:590px;width:1px;height:167px;background:#333"></div>
<div class="a" style="left:835px;top:609px;width:1px;height:148px;background:#333"></div>
<div class="a" style="left:933px;top:609px;width:1px;height:148px;background:#333"></div>
<div class="a" style="left:1029px;top:590px;width:1px;height:167px;background:#333"></div>
<div class="a" style="left:1145px;top:609px;width:1px;height:148px;background:#333"></div>
<div class="a" style="left:1240px;top:590px;width:1px;height:167px;background:#333"></div>
<div class="a" style="left:1350px;top:590px;width:1px;height:167px;background:#333"></div>
<div class="t" style="left:357.00px;top:593.17px;font-size:12.5px;line-height:15px;color:#333;transform:scaleX(1.08);transform-origin:center center;letter-spacing:0.52px;width:383.00px;text-align:center;text-indent:0.52px;">Начислено, руб.</div>
<div class="t" style="left:740.00px;top:593.17px;font-size:12.5px;line-height:15px;color:#333;transform:scaleX(1.08);transform-origin:center center;letter-spacing:0.52px;width:289.00px;text-align:center;text-indent:0.52px;">Удержано, руб.</div>
<div class="t" style="left:1029.00px;top:593.17px;font-size:12.5px;line-height:15px;color:#333;transform:scaleX(1.08);transform-origin:center center;letter-spacing:0.52px;width:211.00px;text-align:center;text-indent:0.52px;">Задолженность, руб</div>
<div class="t" style="left:1238.50px;top:593.17px;font-size:12.5px;line-height:15px;color:#333;transform:scaleX(1.08);transform-origin:center center;letter-spacing:0.52px;width:110.00px;text-align:center;text-indent:0.52px;">Причитается к</div>
<div class="t" style="left:1238.50px;top:609.17px;font-size:12.5px;line-height:15px;color:#333;transform:scaleX(1.08);transform-origin:center center;letter-spacing:0.52px;width:110.00px;text-align:center;text-indent:0.52px;">выплате,</div>
<div class="t" style="left:1238.50px;top:625.17px;font-size:12.5px;line-height:15px;color:#333;transform:scaleX(1.08);transform-origin:center center;letter-spacing:0.52px;width:110.00px;text-align:center;text-indent:0.52px;">руб.</div>
<div class="t" style="left:355.50px;top:612.17px;font-size:12.5px;line-height:15px;color:#333;transform:scaleX(1.08);transform-origin:center center;letter-spacing:0.52px;width:96.00px;text-align:center;text-indent:0.52px;">Компен-</div>
<div class="t" style="left:355.50px;top:628.17px;font-size:12.5px;line-height:15px;color:#333;transform:scaleX(1.08);transform-origin:center center;letter-spacing:0.52px;width:96.00px;text-align:center;text-indent:0.52px;">сация</div>
<div class="t" style="left:355.50px;top:644.17px;font-size:12.5px;line-height:15px;color:#333;transform:scaleX(1.08);transform-origin:center center;letter-spacing:0.52px;width:96.00px;text-align:center;text-indent:0.52px;">отпуска</div>
<div class="t" style="left:451.50px;top:612.17px;font-size:12.5px;line-height:15px;color:#333;transform:scaleX(1.08);transform-origin:center center;letter-spacing:0.52px;width:95.00px;text-align:center;text-indent:0.52px;">Выход-</div>
<div class="t" style="left:451.50px;top:628.17px;font-size:12.5px;line-height:15px;color:#333;transform:scaleX(1.08);transform-origin:center center;letter-spacing:0.52px;width:95.00px;text-align:center;text-indent:0.52px;">ное</div>
<div class="t" style="left:451.50px;top:644.17px;font-size:12.5px;line-height:15px;color:#333;transform:scaleX(1.08);transform-origin:center center;letter-spacing:0.52px;width:95.00px;text-align:center;text-indent:0.52px;">пособие,</div>
<div class="t" style="left:451.50px;top:660.17px;font-size:12.5px;line-height:15px;color:#333;transform:scaleX(1.08);transform-origin:center center;letter-spacing:0.52px;width:95.00px;text-align:center;text-indent:0.52px;">заработок</div>
<div class="t" style="left:451.50px;top:676.17px;font-size:12.5px;line-height:15px;color:#333;transform:scaleX(1.08);transform-origin:center center;letter-spacing:0.52px;width:95.00px;text-align:center;text-indent:0.52px;">на время</div>
<div class="t" style="left:451.50px;top:692.17px;font-size:12.5px;line-height:15px;color:#333;transform:scaleX(1.08);transform-origin:center center;letter-spacing:0.52px;width:95.00px;text-align:center;text-indent:0.52px;">трудоуст-</div>
<div class="t" style="left:451.50px;top:708.17px;font-size:12.5px;line-height:15px;color:#333;transform:scaleX(1.08);transform-origin:center center;letter-spacing:0.52px;width:95.00px;text-align:center;text-indent:0.52px;">ва</div>
<div class="t" style="left:548.00px;top:612.17px;font-size:12.5px;line-height:15px;color:#333;transform:scaleX(1.08);transform-origin:center center;letter-spacing:0.52px;width:97.00px;text-align:center;text-indent:0.52px;">Заработок</div>
<div class="t" style="left:645.00px;top:612.17px;font-size:12.5px;line-height:15px;color:#333;transform:scaleX(1.08);transform-origin:center center;letter-spacing:0.52px;width:95.00px;text-align:center;text-indent:0.52px;">всего</div>
<div class="t" style="left:738.50px;top:612.17px;font-size:12.5px;line-height:15px;color:#333;transform:scaleX(1.08);transform-origin:center center;letter-spacing:0.52px;width:95.00px;text-align:center;text-indent:0.52px;">налог на</div>
<div class="t" style="left:738.50px;top:628.17px;font-size:12.5px;line-height:15px;color:#333;transform:scaleX(1.08);transform-origin:center center;letter-spacing:0.52px;width:95.00px;text-align:center;text-indent:0.52px;">доходы</div>
<div class="t" style="left:833.50px;top:612.17px;font-size:12.5px;line-height:15px;color:#333;transform:scaleX(1.08);transform-origin:center center;letter-spacing:0.52px;width:98.00px;text-align:center;text-indent:0.52px;">прочие</div>
<div class="t" style="left:833.50px;top:628.17px;font-size:12.5px;line-height:15px;color:#333;transform:scaleX(1.08);transform-origin:center center;letter-spacing:0.52px;width:98.00px;text-align:center;text-indent:0.52px;">удержания,</div>
<div class="t" style="left:833.50px;top:644.17px;font-size:12.5px;line-height:15px;color:#333;transform:scaleX(1.08);transform-origin:center center;letter-spacing:0.52px;width:98.00px;text-align:center;text-indent:0.52px;">(в т.ч. за</div>
<div class="t" style="left:833.50px;top:660.17px;font-size:12.5px;line-height:15px;color:#333;transform:scaleX(1.08);transform-origin:center center;letter-spacing:0.52px;width:98.00px;text-align:center;text-indent:0.52px;">отпуск)</div>
<div class="t" style="left:933.00px;top:612.17px;font-size:12.5px;line-height:15px;color:#333;transform:scaleX(1.08);transform-origin:center center;letter-spacing:0.52px;width:96.00px;text-align:center;text-indent:0.52px;">всего</div>
<div class="t" style="left:1027.50px;top:612.17px;font-size:12.5px;line-height:15px;color:#333;transform:scaleX(1.08);transform-origin:center center;letter-spacing:0.52px;width:116.00px;text-align:center;text-indent:0.52px;">за</div>
<div class="t" style="left:1027.50px;top:628.17px;font-size:12.5px;line-height:15px;color:#333;transform:scaleX(1.08);transform-origin:center center;letter-spacing:0.52px;width:116.00px;text-align:center;text-indent:0.52px;">организацией</div>
<div class="t" style="left:1143.50px;top:612.17px;font-size:12.5px;line-height:15px;color:#333;transform:scaleX(1.08);transform-origin:center center;letter-spacing:0.52px;width:95.00px;text-align:center;text-indent:0.52px;">за</div>
<div class="t" style="left:1143.50px;top:628.17px;font-size:12.5px;line-height:15px;color:#333;transform:scaleX(1.08);transform-origin:center center;letter-spacing:0.52px;width:95.00px;text-align:center;text-indent:0.52px;">работником</div>
<div class="t" style="left:357.00px;top:725.17px;font-size:12.5px;line-height:15px;color:#333;transform:scaleX(1.1);transform-origin:center center;letter-spacing:0.5px;width:96.00px;text-align:center;text-indent:0.5px;">10</div>
<div class="t" style="left:453.00px;top:725.17px;font-size:12.5px;line-height:15px;color:#333;transform:scaleX(1.1);transform-origin:center center;letter-spacing:0.5px;width:95.00px;text-align:center;text-indent:0.5px;">11</div>
<div class="t" style="left:548.00px;top:725.17px;font-size:12.5px;line-height:15px;color:#333;transform:scaleX(1.1);transform-origin:center center;letter-spacing:0.5px;width:97.00px;text-align:center;text-indent:0.5px;">12</div>
<div class="t" style="left:645.00px;top:725.17px;font-size:12.5px;line-height:15px;color:#333;transform:scaleX(1.1);transform-origin:center center;letter-spacing:0.5px;width:95.00px;text-align:center;text-indent:0.5px;">13</div>
<div class="t" style="left:740.00px;top:725.17px;font-size:12.5px;line-height:15px;color:#333;transform:scaleX(1.1);transform-origin:center center;letter-spacing:0.5px;width:95.00px;text-align:center;text-indent:0.5px;">14</div>
<div class="t" style="left:835.00px;top:725.17px;font-size:12.5px;line-height:15px;color:#333;transform:scaleX(1.1);transform-origin:center center;letter-spacing:0.5px;width:98.00px;text-align:center;text-indent:0.5px;">15</div>
<div class="t" style="left:933.00px;top:725.17px;font-size:12.5px;line-height:15px;color:#333;transform:scaleX(1.1);transform-origin:center center;letter-spacing:0.5px;width:96.00px;text-align:center;text-indent:0.5px;">16</div>
<div class="t" style="left:1029.00px;top:725.17px;font-size:12.5px;line-height:15px;color:#333;transform:scaleX(1.1);transform-origin:center center;letter-spacing:0.5px;width:116.00px;text-align:center;text-indent:0.5px;">17</div>
<div class="t" style="left:1145.00px;top:725.17px;font-size:12.5px;line-height:15px;color:#333;transform:scaleX(1.1);transform-origin:center center;letter-spacing:0.5px;width:95.00px;text-align:center;text-indent:0.5px;">18</div>
<div class="t" style="left:1240.00px;top:725.17px;font-size:12.5px;line-height:15px;color:#333;transform:scaleX(1.1);transform-origin:center center;letter-spacing:0.5px;width:110.00px;text-align:center;text-indent:0.5px;">19</div>
<div class="t" style="top:741.17px;font-size:12.5px;line-height:15px;color:#333;transform:scaleX(1.1);transform-origin:right center;letter-spacing:0.78px;right:949.72px;text-align:right;">32 423,26</div>
<div class="t" style="top:741.17px;font-size:12.5px;line-height:15px;color:#333;transform:scaleX(1.1);transform-origin:right center;letter-spacing:0.78px;right:757.72px;text-align:right;">30 476,19</div>
<div class="t" style="top:741.17px;font-size:12.5px;line-height:15px;color:#333;transform:scaleX(1.1);transform-origin:right center;letter-spacing:0.78px;right:662.72px;text-align:right;">62 899,45</div>
<div class="t" style="top:741.17px;font-size:12.5px;line-height:15px;color:#333;transform:scaleX(1.1);transform-origin:right center;letter-spacing:0.78px;right:567.72px;text-align:right;">8 177,00</div>
<div class="t" style="top:741.17px;font-size:12.5px;line-height:15px;color:#333;transform:scaleX(1.1);transform-origin:right center;letter-spacing:0.78px;right:469.72px;text-align:right;">18 228,38</div>
<div class="t" style="top:741.17px;font-size:12.5px;line-height:15px;color:#333;transform:scaleX(1.1);transform-origin:right center;letter-spacing:0.78px;right:373.72px;text-align:right;">26 405,38</div>
<div class="t" style="top:741.17px;font-size:12.5px;line-height:15px;color:#333;transform:scaleX(1.1);transform-origin:right center;letter-spacing:0.78px;right:52.72px;text-align:right;">36 494,07</div>
<div class="t" style="left:361.50px;top:775.80px;font-size:15px;line-height:18px;color:#333;transform:scaleX(1.05);transform-origin:left center;letter-spacing:0.19px;">К выплате сумма</div>
<div class="t" style="left:553.50px;top:775.80px;font-size:15px;line-height:18px;color:#333;transform:scaleX(1.06);transform-origin:left center;letter-spacing:0.39px;">Тридцать шесть тысяч четыреста девяносто четыре рубля 07 копеек</div>
<div class="a" style="left:548px;top:793px;width:803px;height:1px;background:#333"></div>
<div class="t" style="left:921.50px;top:794.83px;font-size:10px;line-height:12px;color:#333;transform:scaleX(1.1);transform-origin:left center;letter-spacing:0.57px;">прописью</div>
<div class="t" style="left:1052.00px;top:809.40px;font-size:15px;line-height:18px;color:#333;transform:scaleX(1.08);transform-origin:left center;letter-spacing:0.75px;">(36 494 руб 7 коп)</div>
<div class="a" style="left:548px;top:826px;width:803px;height:1px;background:#333"></div>
<div class="t" style="left:1050.00px;top:828.13px;font-size:10px;line-height:12px;color:#333;transform:scaleX(1.1);transform-origin:left center;letter-spacing:0.45px;">цифрами</div>
<div class="a" style="left:1385px;top:98px;width:8px;height:724px;background:#d4d4d4;border-radius:4px"></div>
<div class="a" style="left:1385px;top:495px;width:8px;height:273px;background:#9b9b9b;border-radius:4px"></div>
<svg class="a" style="left:1385px;top:84px;" width="8" height="5" viewBox="0 0 8 5"><path d="M0.5 4 L4 0 L7.5 4 Z" fill="#444"/></svg>
<svg class="a" style="left:1385px;top:832px;" width="8" height="5" viewBox="0 0 8 5"><path d="M0.5 0 L4 4 L7.5 0 Z" fill="#444"/></svg>
<div class="a" style="left:381px;top:848px;width:978px;height:8px;background:#d4d4d4;border-radius:4px"></div>
<div class="a" style="left:381px;top:848px;width:890px;height:8px;background:#9b9b9b;border-radius:4px"></div>
<svg class="a" style="left:367px;top:848px;" width="5" height="8" viewBox="0 0 5 8"><path d="M4 0.5 L0 4 L4 7.5 Z" fill="#bbb"/></svg>
<svg class="a" style="left:1369px;top:848px;" width="5" height="8" viewBox="0 0 5 8"><path d="M0 0.5 L4 4 L0 7.5 Z" fill="#444"/></svg>
</body></html>
